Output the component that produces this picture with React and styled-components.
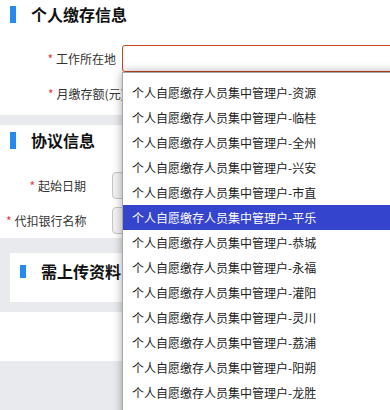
import styled, { createGlobalStyle } from "styled-components";

const GlobalStyle = createGlobalStyle`
  html, body {
    margin: 0;
    padding: 0;
    overflow: hidden;
  }
  body {
    font-family: "Noto Sans CJK SC", "Noto Sans", sans-serif;
    color: #333;
  }
`;

const options = [
  "资源",
  "临桂",
  "全州",
  "兴安",
  "市直",
  "平乐",
  "恭城",
  "永福",
  "灌阳",
  "灵川",
  "荔浦",
  "阳朔",
  "龙胜",
];

function App() {
  return (
    <Page>
      <GlobalStyle />
      <Section $top={6} $bottom={8}>
        <Title>个人缴存信息</Title>
        <Row $gap={22}>
          <Label $left={46} $width={70}>
            <Star>*</Star>工作所在地
          </Label>
          <ActiveInput />
        </Row>
        <Row $gap={8}>
          <Label $left={48} $width={70}>
            <Star>*</Star>月缴存额(元)
          </Label>
        </Row>
      </Section>

      <Section $top={7} $bottom={4} $space={10}>
        <Title>协议信息</Title>
        <Row $gap={23}>
          <Label $left={6} $width={80}>
            <Star>*</Star>起始日期
          </Label>
          <GrayInput />
        </Row>
        <Row $gap={8}>
          <Label $left={6} $width={80}>
            <Star>*</Star>代扣银行名称
          </Label>
          <GrayInput />
        </Row>
      </Section>

      <Card>
        <Title $bar={13} $inset={10}>
          需上传资料
        </Title>
      </Card>

      <Band />

      <Dropdown>
        {options.map((name) => (
          <Option key={name} $selected={name === "平乐"}>
            个人自愿缴存人员集中管理户-{name}
          </Option>
        ))}
      </Dropdown>
    </Page>
  );
}

const Page = styled.div`
  position: relative;
  width: 390px;
  height: 410px;
  overflow: hidden;
  background: #e9eaee;
`;

const Section = styled.section`
  background: #fff;
  margin-top: ${(p) => p.$space || 0}px;
  padding-top: ${(p) => p.$top}px;
  padding-bottom: ${(p) => p.$bottom}px;
`;

const Title = styled.h2`
  display: flex;
  align-items: center;
  gap: 15px;
  height: 17px;
  margin: 0;
  padding-left: ${(p) => p.$inset || 10}px;
  font-size: 16px;
  font-weight: 700;
  color: #111;
  line-height: 17px;

  &::before {
    content: "";
    width: 6px;
    height: ${(p) => p.$bar || 17}px;
    background: #2489f0;
  }
`;

const Row = styled.div`
  display: flex;
  align-items: center;
  height: 27px;
  margin-top: ${(p) => p.$gap}px;
`;

const Label = styled.label`
  flex: none;
  margin-left: ${(p) => p.$left}px;
  width: ${(p) => p.$width}px;
  text-align: right;
  white-space: nowrap;
  font-size: 12px;
  color: #333;
`;

const Star = styled.span`
  color: #e8383d;
  margin-right: 3px;
`;

const ActiveInput = styled.div`
  flex: none;
  margin-left: 6px;
  width: 300px;
  height: 25px;
  border: 1px solid #c8461e;
  border-radius: 3px;
  background: #fff;
`;

const GrayInput = styled.div`
  flex: none;
  margin-left: 26px;
  width: 300px;
  height: 25px;
  border: 1px solid #c6c6c6;
  border-radius: 4px;
  background: #f3f3f3;
`;

const Card = styled.div`
  background: #fff;
  margin: 15px 10px 0;
  height: 49px;
  padding-top: 10px;
  box-sizing: border-box;
`;

const Band = styled.div`
  background: #fff;
  margin-top: 10px;
  height: 49px;
`;

const Dropdown = styled.ul`
  position: absolute;
  top: 72px;
  left: 122px;
  width: 300px;
  margin: 0;
  padding: 7px 0 20px;
  list-style: none;
  background: #fff;
  border: 1px solid #a8a8a8;
  box-shadow: 0 0 9px rgba(0, 0, 0, 0.35);
`;

const Option = styled.li`
  height: 25px;
  line-height: 25px;
  padding-left: 9px;
  font-size: 12px;
  white-space: nowrap;
  color: ${(p) => (p.$selected ? "#fff" : "#222")};
  background: ${(p) => (p.$selected ? "#3444cc" : "transparent")};
`;

export default App;
